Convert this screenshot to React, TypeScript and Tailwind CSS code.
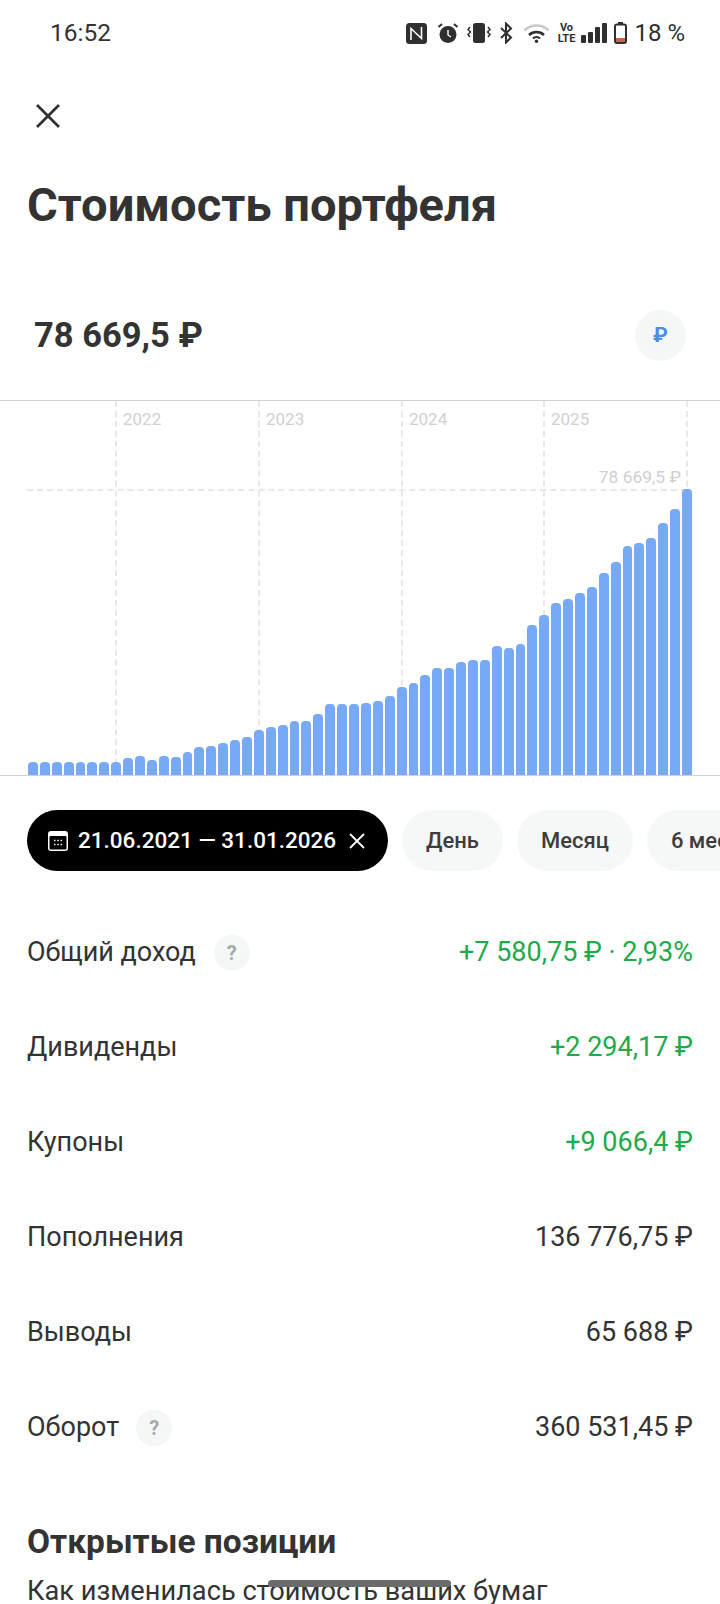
const barTops = [
  1117, 1117, 1117, 1117, 1117, 1117, 1117, 1117, 1103, 1097, 1110, 1098, 1101, 1087, 1071, 1068, 1059, 1050, 1040, 1020,
  1011, 1005, 992, 992, 972, 942, 942, 942, 938, 934, 918, 890, 879, 855, 833, 833, 817, 809, 810, 768, 774, 762, 704,
  674, 640, 628, 610, 592, 549, 515, 469, 460, 443, 399, 357, 297,
];
const years = [
  { label: "2022", line: "left-[115px]" },
  { label: "2023", line: "left-[258px]" },
  { label: "2024", line: "left-[401px]" },
  { label: "2025", line: "left-[543px]" },
];
const chips = ["День", "Месяц", "6 месяцев"];
const rows = [
  { label: "Общий доход", value: "+7 580,75 ₽ · 2,93%", green: true, help: true, gap: "ml-[18px]" },
  { label: "Дивиденды", value: "+2 294,17 ₽", green: true },
  { label: "Купоны", value: "+9 066,4 ₽", green: true },
  { label: "Пополнения", value: "136 776,75 ₽" },
  { label: "Выводы", value: "65 688 ₽" },
  { label: "Оборот", value: "360 531,45 ₽", help: true, gap: "ml-[17px]" },
];

function StatusIcons() {
  return (
    <div className="flex items-center text-[#2f2f2f]">
      <svg width="21" height="21" viewBox="0 0 21 21">
        <rect width="21" height="21" rx="3.500" fill="#2f2f2f" />
        <path d="M5 17V5.500l10.500 10V4" fill="none" stroke="#fff" strokeWidth="1.600" />
      </svg>
      <svg width="22" height="22" viewBox="0 0 22 22" className="ml-[10px]">
        <circle cx="11" cy="12.500" r="8.500" fill="#2f2f2f" />
        <path d="M11 8v5l3 2" fill="none" stroke="#fff" strokeWidth="1.400" />
        <path d="M1.500 5 5 2M20.500 5 17 2" stroke="#2f2f2f" strokeWidth="2" />
      </svg>
      <svg width="24" height="22" viewBox="0 0 24 22" className="ml-[8px]">
        <rect x="6" y="1" width="12" height="20" rx="2.500" fill="#2f2f2f" />
        <path d="M3 5 1 7.500l2.500 2.500L1 12.500 3 15M21 5l2 2.500-2.500 2.500 2.500 2.500L21 15" fill="none" stroke="#2f2f2f" strokeWidth="1.500" />
      </svg>
      <svg width="13" height="22" viewBox="0 0 13 22" className="ml-[9px]">
        <path d="M1 6l10 9.500-5 5V1.500l5 5L1 16" fill="none" stroke="#2f2f2f" strokeWidth="2" />
      </svg>
      <svg width="27" height="20" viewBox="0 0 27 20" className="ml-[10px]">
        <path d="M1.500 7.500a17 17 0 0 1 24 0" fill="none" stroke="#c9c9c9" strokeWidth="2.500" />
        <path d="M6 12a11 11 0 0 1 15 0" fill="none" stroke="#2f2f2f" strokeWidth="2.500" />
        <path d="M10 15.500a5 5 0 0 1 7 0" fill="none" stroke="#2f2f2f" strokeWidth="2.200" />
        <circle cx="13.500" cy="18.300" r="1.700" fill="#2f2f2f" />
      </svg>
      <div className="ml-[9px] flex w-[14px] flex-col items-center text-[11px] leading-[11px] font-bold">
        <span>Vo</span>
        <span>LTE</span>
      </div>
      <div className="ml-[8px] flex h-[20px] items-end gap-[2px]">
        <div className="h-[8px] w-[5px] rounded-[1px] bg-[#2f2f2f]" />
        <div className="h-[11px] w-[5px] rounded-[1px] bg-[#2f2f2f]" />
        <div className="h-[16px] w-[5px] rounded-[1px] bg-[#2f2f2f]" />
        <div className="h-[20px] w-[5px] rounded-[1px] bg-[#2f2f2f]" />
      </div>
      <svg width="13" height="22" viewBox="0 0 13 22" className="ml-[7px]">
        <rect x="4" y="0" width="5" height="3" fill="#2f2f2f" />
        <rect x="1" y="2.500" width="11" height="18.500" rx="2" fill="#fff" stroke="#2f2f2f" strokeWidth="2" />
        <rect x="2" y="16" width="9" height="4" fill="#c8654f" />
      </svg>
      <span className="ml-[7px] text-[24px] leading-none">18 %</span>
    </div>
  );
}

function Help() {
  return (
    <div className="flex h-[36px] w-[36px] items-center justify-center rounded-full bg-[#f5f7f7] text-[20px] font-bold text-[#a4a9ad]">
      ?
    </div>
  );
}

export default function App() {
  return (
    <div className="relative h-[1604px] w-[720px] overflow-hidden bg-white font-['Roboto',sans-serif] text-[#333333]">
      <div className="flex h-[66px] items-center justify-between pr-[35px] pl-[50px]">
        <span className="text-[24.500px] leading-none">16:52</span>
        <StatusIcons />
      </div>

      <button className="mt-[38px] ml-[36px] block h-[24px] w-[24px]">
        <svg width="24" height="24" viewBox="0 0 24 24">
          <path d="M1 1l22 22M23 1 1 23" stroke="#333" strokeWidth="2.800" fill="none" />
        </svg>
      </button>

      <h1 className="mt-[50px] ml-[27px] text-[47.100px] leading-[54px] font-bold">Стоимость портфеля</h1>

      <div className="mt-[78px] flex h-[51px] items-center justify-between pr-[34px] pl-[34px]">
        <span className="text-[34.500px] font-bold">78 669,5 ₽</span>
        <div className="flex h-[51px] w-[51px] items-center justify-center rounded-full bg-[#f5f7f7] text-[21px] font-bold text-[#4a8fe0]">
          ₽
        </div>
      </div>

      <div className="relative mt-[39px] h-[376px] border-y border-[#d2d2d2]">
        {years.map((y) => (
          <div key={y.label} className={`absolute top-0 bottom-0 border-l-2 border-dashed border-[#e8e8e8] ${y.line}`}>
            <span className="absolute top-[6px] left-[6px] text-[17px] text-[#d0d0d0]">{y.label}</span>
          </div>
        ))}
        <div className="absolute top-0 bottom-0 left-[686px] border-l-2 border-dashed border-[#e8e8e8]" />
        <div className="absolute top-[88px] left-[27px] w-[660px] border-t-2 border-dashed border-[#e8e8e8]" />
        <span className="absolute top-[63px] right-[39px] text-[17.400px] text-[#cfcfcf]">78 669,5 ₽</span>
        <div className="absolute right-[28px] bottom-0 left-[28px] flex items-end gap-[2px]">
          {barTops.map((t, i) => (
            <div
              key={i}
              className="flex-1 rounded-t-[4px] bg-[#78a9f6]"
              style={{ height: (1155 - t) / 3 }}
            />
          ))}
        </div>
      </div>

      <div className="mt-[34px] flex items-center gap-[14px] overflow-hidden pl-[27px]">
        <div className="flex h-[61px] w-[361px] shrink-0 items-center rounded-full bg-black pl-[20px] text-white">
          <svg width="22" height="22" viewBox="0 0 22 22">
            <rect x="1" y="1" width="20" height="20" rx="3" fill="#fff" />
            <rect x="2.500" y="6" width="17" height="13.500" rx="1" fill="#000" />
            <path d="M7 10.500h1.500M10.300 10.500h1.500M13.600 10.500h1.500M7 14.500h1.500M10.300 14.500h1.500M13.600 14.500h1.500" stroke="#fff" strokeWidth="1.500" />
          </svg>
          <span className="ml-[9px] text-[22.500px] font-medium">21.06.2021 — 31.01.2026</span>
          <svg width="16" height="16" viewBox="0 0 16 16" className="ml-[13px]">
            <path d="M1 1l14 14M15 1 1 15" stroke="#fff" strokeWidth="1.800" />
          </svg>
        </div>
        {chips.map((c) => (
          <div key={c} className="flex h-[61px] shrink-0 items-center rounded-full bg-[#f6f8f8] px-[24px] text-[22px] font-medium text-[#3d3d3d]">
            {c}
          </div>
        ))}
      </div>

      <div className="mt-[34px] flex flex-col">
        {rows.map((r) => (
          <div key={r.label} className="flex h-[95px] items-center justify-between pr-[27px] pl-[27px] text-[27px]">
            <div className="flex items-center">
              <span>{r.label}</span>
              {r.help && (
                <div className={r.gap}>
                  <Help />
                </div>
              )}
            </div>
            <span className={r.green ? "text-[#22a94a]" : ""}>{r.value}</span>
          </div>
        ))}
      </div>

      <h2 className="mt-[47px] ml-[27px] text-[33.500px] leading-[40px] font-bold">Открытые позиции</h2>
      <p className="mt-[13px] ml-[27px] text-[27.200px] leading-[32px]">Как изменилась стоимость ваших бумаг</p>

      <div className="absolute top-[1580px] left-[268px] h-[7px] w-[183px] rounded-full bg-[#6b6b6b]" />
    </div>
  );
}
